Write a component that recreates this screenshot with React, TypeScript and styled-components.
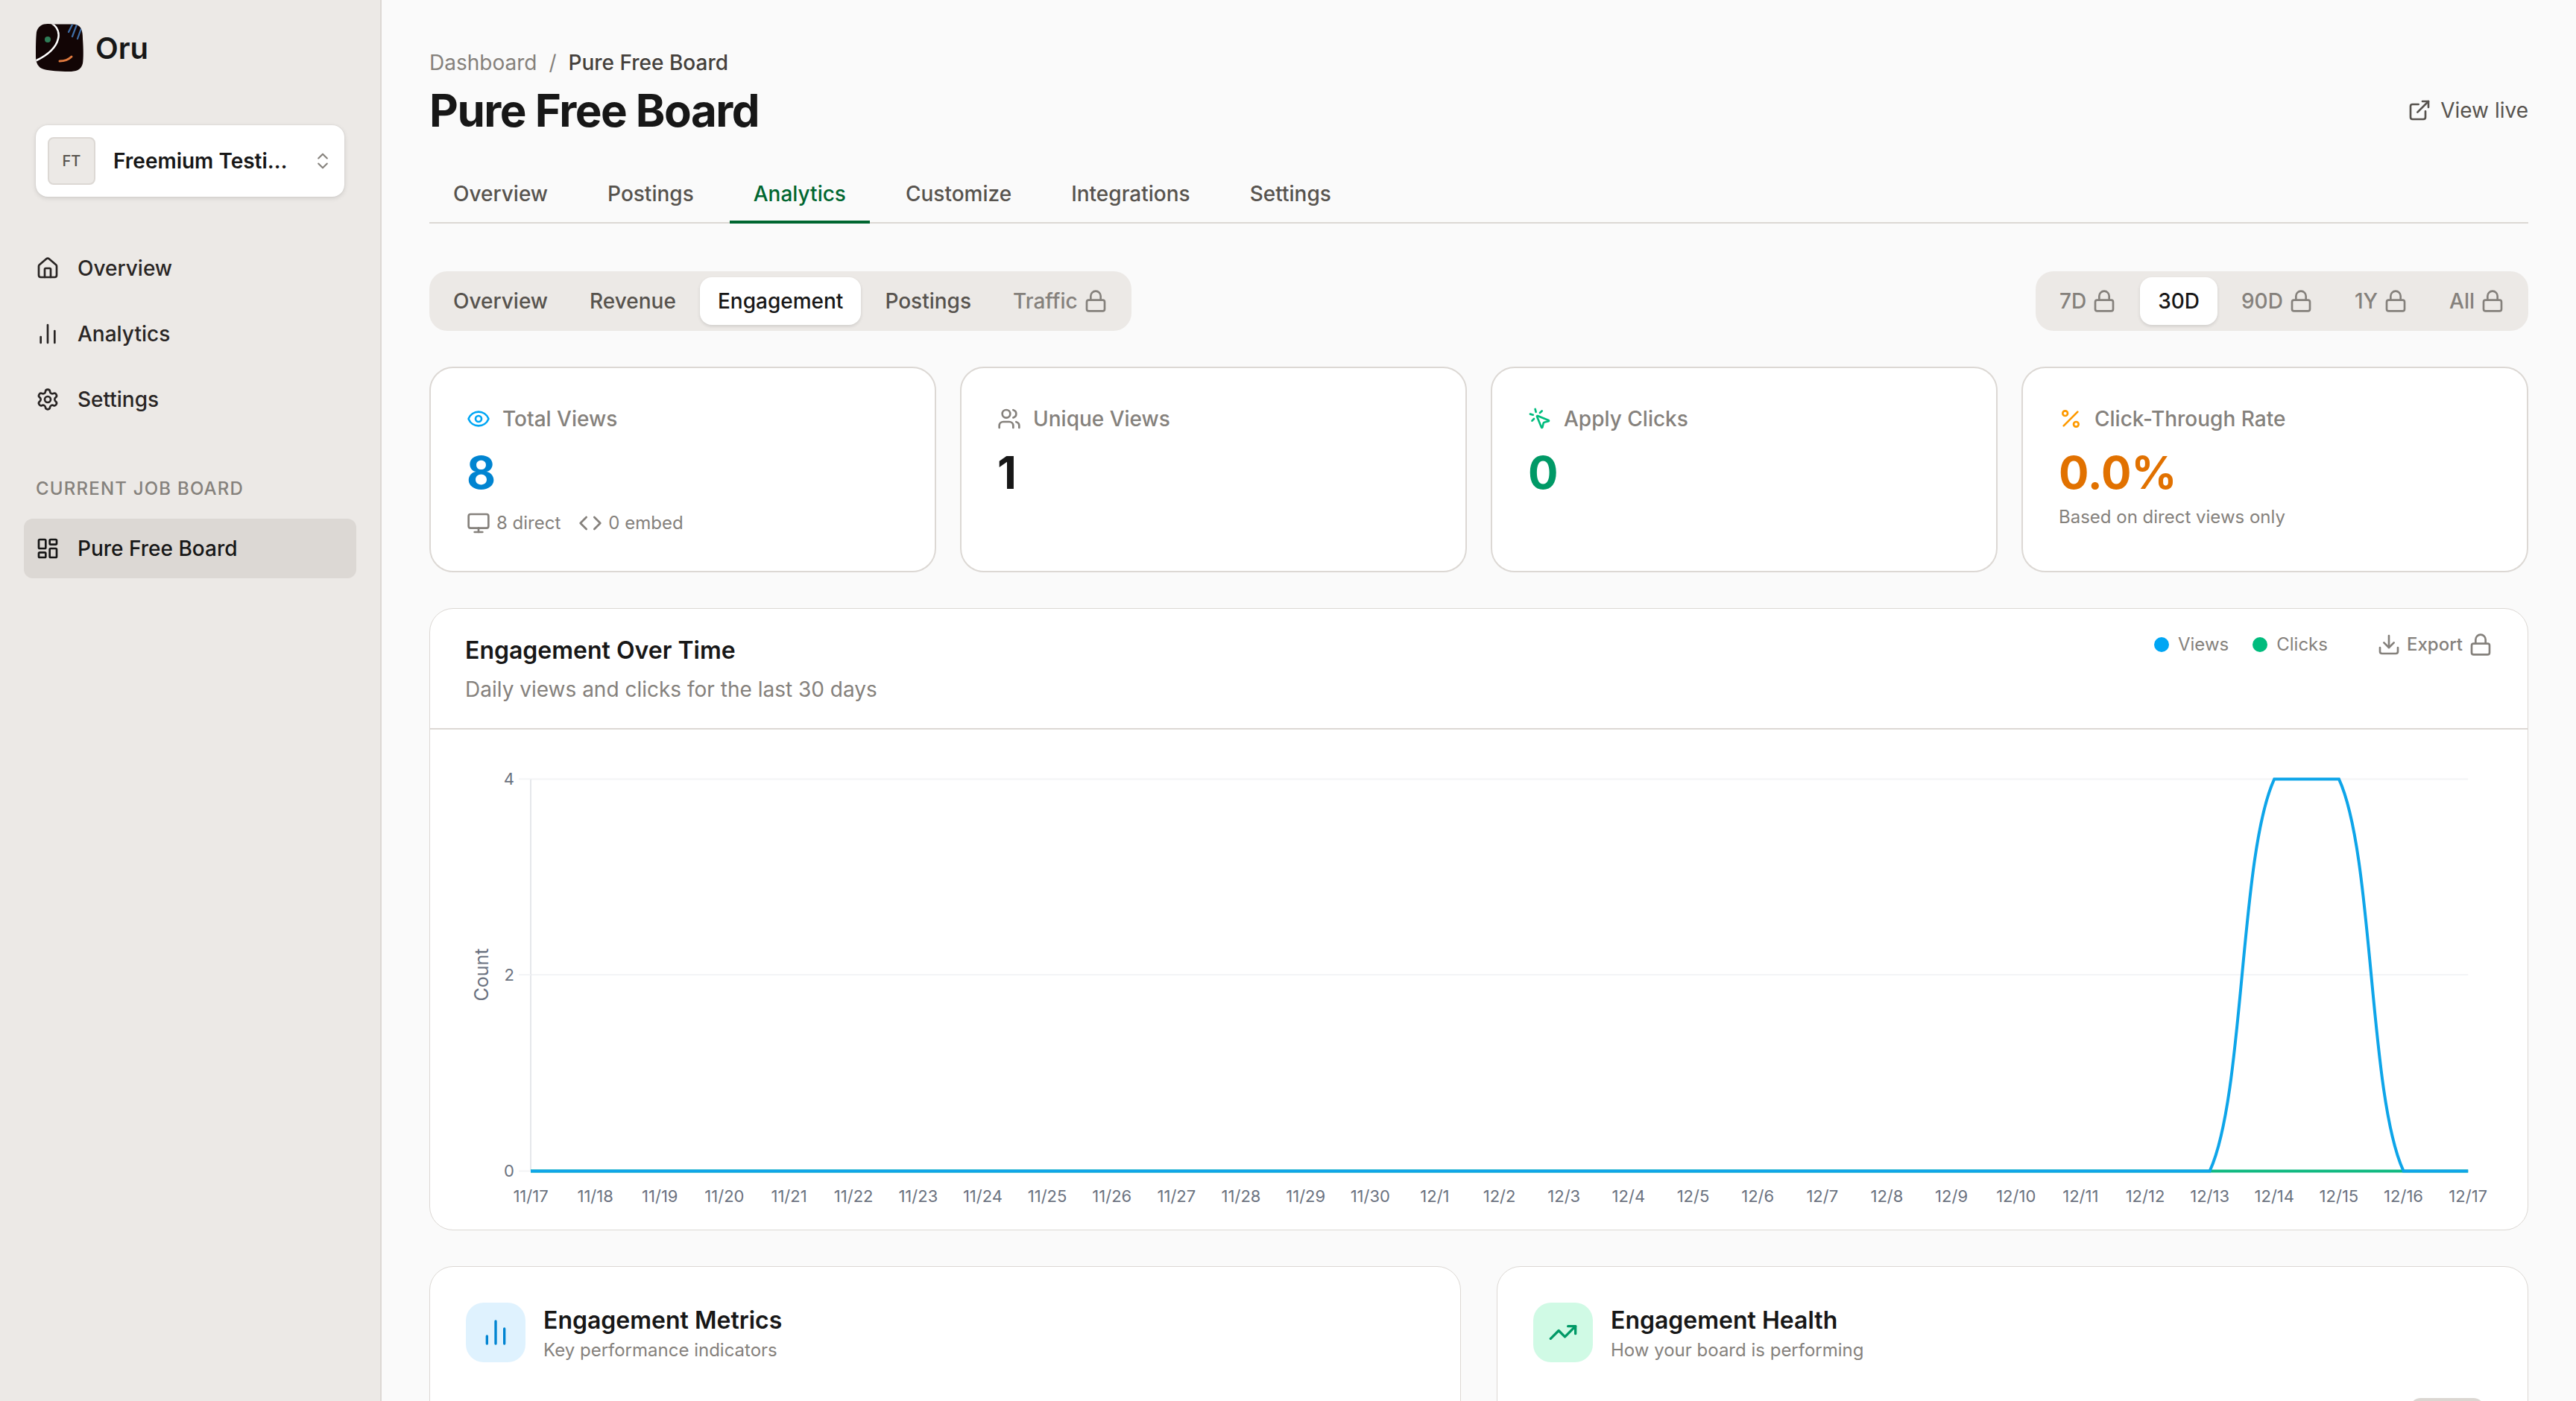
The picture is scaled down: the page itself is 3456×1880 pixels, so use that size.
import styled, { createGlobalStyle } from "styled-components";
import {
  ChartNoAxesColumn,
  ChevronsUpDown,
  Code,
  Download,
  ExternalLink,
  Eye,
  House,
  LayoutDashboard,
  Lock,
  Monitor,
  MousePointerClick,
  Percent,
  Settings,
  TrendingUp,
  Users,
} from "lucide-react";

const GlobalStyle = createGlobalStyle`
  html, body {
    margin: 0;
    padding: 0;
    background: #fafafa;
    overflow: hidden;
  }
  * {
    box-sizing: border-box;
  }
  #root {
    zoom: 2;
  }
`;

const Page = styled.div`
  display: flex;
  width: 1728px;
  height: 940px;
  overflow: hidden;
  font-family: Inter, "Liberation Sans", sans-serif;
  color: #171717;
  background: #fafafa;
`;

const Sidebar = styled.aside`
  flex: 0 0 256px;
  background: #ece9e6;
  border-right: 1px solid #dcd8d4;
  padding-top: 16px;
`;

const Brand = styled.div`
  display: flex;
  align-items: center;
  gap: 8px;
  padding-left: 24px;
  font-size: 20px;
  font-weight: 600;
`;

const BoardSelect = styled.button`
  display: flex;
  align-items: center;
  gap: 12px;
  width: 207px;
  height: 48px;
  margin: 36px 0 28px 24px;
  padding: 0 7.5px 0 8px;
  border: 0;
  border-radius: 8px;
  background: #fff;
  box-shadow: 0 1px 3px rgba(0, 0, 0, 0.12), 0 0 1px rgba(0, 0, 0, 0.1);
  font: inherit;
  color: #171717;
`;

const Avatar = styled.span`
  flex: 0 0 32px;
  height: 32px;
  display: flex;
  align-items: center;
  justify-content: center;
  border: 1px solid #dcd8d4;
  border-radius: 4px;
  background: #ece9e6;
  font-size: 10px;
  font-weight: 500;
  color: #57534e;
`;

const BoardName = styled.span`
  flex: 1;
  min-width: 0;
  white-space: nowrap;
  text-align: left;
  font-size: 14px;
  font-weight: 600;
`;

const NavList = styled.nav`
  display: flex;
  flex-direction: column;
  gap: 4px;
  padding: 0 16px 0 16px;
`;

const NavItem = styled.a<{ $active?: boolean }>`
  display: flex;
  align-items: center;
  gap: 12px;
  height: 40px;
  padding: 0 8px;
  border-radius: 6px;
  font-size: 14px;
  font-weight: 500;
  color: ${(p) => (p.$active ? "#171717" : "#292524")};
  background: ${(p) => (p.$active ? "#dcd8d4" : "transparent")};
`;

const SectionLabel = styled.div`
  margin: 32px 0 12px 24px;
  line-height: 16px;
  font-size: 12px;
  font-weight: 500;
  letter-spacing: 0.05em;
  text-transform: uppercase;
  color: #85817c;
`;

const Main = styled.main`
  flex: 1;
  min-width: 0;
  padding: 32px 32px 0;
`;

const Breadcrumb = styled.div`
  display: flex;
  gap: 8px;
  line-height: 20px;
  font-size: 14px;
  color: #85817c;
  span:last-child {
    color: #44403c;
    font-weight: 500;
  }
`;

const HeaderRow = styled.div`
  display: flex;
  justify-content: space-between;
  align-items: flex-end;
`;

const Title = styled.h1`
  margin: 4px 0 0;
  line-height: 36px;
  font-size: 30px;
  font-weight: 700;
  letter-spacing: -0.025em;
`;

const ViewLive = styled.a`
  display: flex;
  align-items: center;
  gap: 6px;
  height: 36px;
  font-size: 14px;
  color: #57534e;
`;

const TabBar = styled.div`
  display: flex;
  gap: 8px;
  margin-top: 16px;
  border-bottom: 1px solid #dcd8d4;
`;

const Tab = styled.a<{ $active?: boolean }>`
  margin-bottom: -1px;
  padding: 12px 16px 8px;
  line-height: 20px;
  font-size: 14px;
  font-weight: 500;
  border-bottom: 2px solid ${(p) => (p.$active ? "#006630" : "transparent")};
  color: ${(p) => (p.$active ? "#006630" : "#57534e")};
`;

const ControlRow = styled.div`
  display: flex;
  justify-content: space-between;
  margin-top: 32px;
`;

const Segmented = styled.div`
  display: flex;
  gap: 4px;
  height: 40px;
  padding: 4px;
  border-radius: 12px;
  background: #ece9e6;
`;

const Segment = styled.span<{ $active?: boolean; $locked?: boolean }>`
  display: flex;
  align-items: center;
  gap: 4px;
  padding: 0 12px;
  border-radius: 8px;
  font-size: 14px;
  font-weight: 500;
  color: ${(p) => (p.$active ? "#171717" : p.$locked ? "#85817c" : "#57534e")};
  background: ${(p) => (p.$active ? "#fff" : "transparent")};
  box-shadow: ${(p) => (p.$active ? "0 1px 2px rgba(0, 0, 0, 0.12)" : "none")};
`;

const StatGrid = styled.div`
  display: grid;
  grid-template-columns: repeat(4, 1fr);
  gap: 16px;
  margin-top: 24px;
`;

const StatCard = styled.div`
  padding: 24px;
  border: 1px solid #dcd8d4;
  border-radius: 16px;
  background: #fff;
`;

const StatLabel = styled.div`
  display: flex;
  align-items: center;
  gap: 8px;
  line-height: 20px;
  font-size: 14px;
  font-weight: 500;
  color: #85817c;
`;

const StatValue = styled.div<{ $color: string }>`
  margin-top: 8px;
  line-height: 36px;
  font-size: 30px;
  font-weight: 700;
  color: ${(p) => p.$color};
`;

const StatMeta = styled.div`
  display: flex;
  align-items: center;
  gap: 12px;
  margin-top: 8px;
  line-height: 16px;
  font-size: 12px;
  color: #85817c;
`;

const MetaItem = styled.span`
  display: flex;
  align-items: center;
  gap: 4px;
`;

const StatNote = styled.div`
  margin-top: 4px;
  line-height: 16px;
  font-size: 12px;
  color: #85817c;
`;

const ChartCard = styled.section`
  margin-top: 24px;
  border: 0.5px solid #dcd8d4;
  border-radius: 16px;
  background: #fff;
  overflow: hidden;
`;

const ChartHeader = styled.header`
  display: flex;
  justify-content: space-between;
  padding: 16px 23.5px;
  border-bottom: 1px solid #dcd8d4;
`;

const CardTitle = styled.h2`
  margin: 0;
  line-height: 24px;
  font-size: 16px;
  font-weight: 600;
`;

const ChartSub = styled.p`
  margin: 4px 0 0;
  line-height: 20px;
  font-size: 14px;
  color: #85817c;
`;

const ChartTools = styled.div`
  display: flex;
  align-items: flex-start;
  line-height: 16px;
  font-size: 12px;
  color: #85817c;
`;

const Legend = styled.span`
  display: flex;
  align-items: center;
  gap: 6px;
  margin-right: 16px;
`;

const Dot = styled.i<{ $color: string }>`
  width: 10px;
  height: 10px;
  border-radius: 50%;
  background: ${(p) => p.$color};
`;

const ExportButton = styled.span`
  display: flex;
  align-items: center;
  gap: 4px;
  margin-left: 17px;
  font-weight: 500;
`;

const ChartSvg = styled.svg`
  display: block;
  width: 100%;
  height: 335.5px;
  font-family: Inter, "Liberation Sans", sans-serif;
`;

const BottomGrid = styled.div`
  display: grid;
  grid-template-columns: 1fr 1fr;
  gap: 24px;
  margin-top: 24px;
`;

const InfoCard = styled.section`
  height: 200px;
  padding: 24px;
  border: 0.5px solid #dcd8d4;
  border-radius: 16px;
  background: #fff;
`;

const InfoHeader = styled.div`
  display: flex;
  gap: 12px;
`;

const InfoIcon = styled.span<{ $bg: string; $color: string }>`
  display: flex;
  align-items: center;
  justify-content: center;
  width: 40px;
  height: 40px;
  border-radius: 12px;
  background: ${(p) => p.$bg};
  color: ${(p) => p.$color};
`;

const InfoSub = styled.p`
  margin: 0;
  line-height: 16px;
  font-size: 12px;
  color: #85817c;
`;

const Pill = styled.span`
  display: block;
  width: 51px;
  height: 20px;
  margin: 24px 4.5px 0 auto;
  border-radius: 8px;
  background: #dbd7d2;
`;

const Logo = () => (
  <svg width="32" height="32" viewBox="0 0 64 64">
    <defs>
      <clipPath id="logo-clip">
        <path d="M16 0C30 1 48 0 54 1C61 3 63 9 63 20C64 34 64 46 63 53C61 62 54 64 44 64C32 64 18 63 11 61C3 59 0 52 0 44C0 32 0 20 1 11C3 3 9 0 16 0Z" />
      </clipPath>
    </defs>
    <g clipPath="url(#logo-clip)">
      <rect width="64" height="64" fill="#120505" />
      <path d="M21 -1C29 4 32 12 30 20C27 33 14 43 -1 50" fill="none" stroke="#fff" strokeWidth="2.6" />
      <circle cx="16" cy="21" r="4" fill="#2f7d57" />
      <path d="M32 50C38 50 44 48 48 44" fill="none" stroke="#e07a3f" strokeWidth="3" strokeLinecap="round" />
      <path d="M49 1L44 11M55 1L49 17M61 6L56 20" fill="none" stroke="#3f6fa8" strokeWidth="2.2" strokeLinecap="round" />
    </g>
  </svg>
);

const ticks = [
  ...[17, 18, 19, 20, 21, 22, 23, 24, 25, 26, 27, 28, 29, 30].map((d) => `11/${d}`),
  ...Array.from({ length: 17 }, (_, i) => `12/${i + 1}`),
];

const X0 = 67.5;
const STEP = 43.32;
const TOP = 33.2;
const MID = 164.5;
const BOTTOM = 296.2;
const xAt = (i: number) => X0 + i * STEP;
const XEND = xAt(30);

const viewsPath = [
  `M${X0} ${BOTTOM}L${xAt(26)} ${BOTTOM}`,
  `C${xAt(26) + 23.4} ${BOTTOM - 50.5} ${xAt(27) - 23.4} ${TOP + 50.5} ${xAt(27)} ${TOP}`,
  `L${xAt(28)} ${TOP}`,
  `C${xAt(28) + 23.4} ${TOP + 50.5} ${xAt(29) - 23.4} ${BOTTOM - 50.5} ${xAt(29)} ${BOTTOM}`,
  `L${XEND} ${BOTTOM}`,
].join("");

const EngagementChart = () => (
  <ChartSvg viewBox="0 0 1407 335.5">
    {[TOP, MID].map((y) => (
      <line key={y} x1={X0} x2={XEND} y1={y} y2={y} stroke="#f3f4f6" />
    ))}
    <line x1={X0} x2={X0} y1={TOP} y2={BOTTOM} stroke="#e5e7eb" />
    {[TOP, MID, BOTTOM].map((y) => (
      <line key={y} x1={X0 - 8} x2={X0} y1={y} y2={y} stroke="#f3f4f6" />
    ))}
    {[
      ["4", TOP],
      ["2", MID],
      ["0", BOTTOM],
    ].map(([label, y]) => (
      <text key={label} x={X0 - 11} y={Number(y) + 4} textAnchor="end" fontSize="11" fill="#6b7280">
        {label}
      </text>
    ))}
    <text
      transform={`translate(39 ${MID}) rotate(-90)`}
      textAnchor="middle"
      fontSize="12.5"
      fill="#6b7280"
    >
      Count
    </text>
    {ticks.map((t, i) => (
      <text key={t} x={xAt(i)} y={317} textAnchor="middle" fontSize="11" fill="#6b7280">
        {t}
      </text>
    ))}
    <line x1={X0} x2={XEND} y1={BOTTOM} y2={BOTTOM} stroke="#10b981" strokeWidth="2" />
    <path d={viewsPath} fill="none" stroke="#0ea5e9" strokeWidth="2" strokeLinejoin="miter" />
  </ChartSvg>
);

function App() {
  return (
    <Page>
      <GlobalStyle />
      <Sidebar>
        <Brand>
          <Logo />
          Oru
        </Brand>
        <BoardSelect>
          <Avatar>FT</Avatar>
          <BoardName>Freemium Testi…</BoardName>
          <ChevronsUpDown size={14} strokeWidth={1.75} color="#85817c" />
        </BoardSelect>
        <NavList>
          <NavItem>
            <House size={16} />
            Overview
          </NavItem>
          <NavItem>
            <ChartNoAxesColumn size={16} />
            Analytics
          </NavItem>
          <NavItem>
            <Settings size={16} />
            Settings
          </NavItem>
        </NavList>
        <SectionLabel>Current job board</SectionLabel>
        <NavList>
          <NavItem $active>
            <LayoutDashboard size={16} />
            Pure Free Board
          </NavItem>
        </NavList>
      </Sidebar>
      <Main>
        <Breadcrumb>
          <span>Dashboard</span>
          <span>/</span>
          <span>Pure Free Board</span>
        </Breadcrumb>
        <HeaderRow>
          <Title>Pure Free Board</Title>
          <ViewLive>
            <ExternalLink size={16} />
            View live
          </ViewLive>
        </HeaderRow>
        <TabBar>
          <Tab>Overview</Tab>
          <Tab>Postings</Tab>
          <Tab $active>Analytics</Tab>
          <Tab>Customize</Tab>
          <Tab>Integrations</Tab>
          <Tab>Settings</Tab>
        </TabBar>
        <ControlRow>
          <Segmented>
            <Segment>Overview</Segment>
            <Segment>Revenue</Segment>
            <Segment $active>Engagement</Segment>
            <Segment>Postings</Segment>
            <Segment $locked>
              Traffic
              <Lock size={16} />
            </Segment>
          </Segmented>
          <Segmented>
            <Segment $locked>
              7D
              <Lock size={16} />
            </Segment>
            <Segment $active>30D</Segment>
            <Segment $locked>
              90D
              <Lock size={16} />
            </Segment>
            <Segment $locked>
              1Y
              <Lock size={16} />
            </Segment>
            <Segment $locked>
              All
              <Lock size={16} />
            </Segment>
          </Segmented>
        </ControlRow>
        <StatGrid>
          <StatCard>
            <StatLabel>
              <Eye size={16} color="#00a6f4" />
              Total Views
            </StatLabel>
            <StatValue $color="#0084d1">8</StatValue>
            <StatMeta>
              <MetaItem>
                <Monitor size={16} />8 direct
              </MetaItem>
              <MetaItem>
                <Code size={16} />0 embed
              </MetaItem>
            </StatMeta>
          </StatCard>
          <StatCard>
            <StatLabel>
              <Users size={16} />
              Unique Views
            </StatLabel>
            <StatValue $color="#171717">1</StatValue>
          </StatCard>
          <StatCard>
            <StatLabel>
              <MousePointerClick size={16} color="#00bc7d" />
              Apply Clicks
            </StatLabel>
            <StatValue $color="#009966">0</StatValue>
          </StatCard>
          <StatCard>
            <StatLabel>
              <Percent size={16} color="#fe9a00" />
              Click-Through Rate
            </StatLabel>
            <StatValue $color="#e17100">0.0%</StatValue>
            <StatNote>Based on direct views only</StatNote>
          </StatCard>
        </StatGrid>
        <ChartCard>
          <ChartHeader>
            <div>
              <CardTitle>Engagement Over Time</CardTitle>
              <ChartSub>Daily views and clicks for the last 30 days</ChartSub>
            </div>
            <ChartTools>
              <Legend>
                <Dot $color="#00a6f4" />
                Views
              </Legend>
              <Legend>
                <Dot $color="#00bc7d" />
                Clicks
              </Legend>
              <ExportButton>
                <Download size={16} />
                Export
                <Lock size={16} />
              </ExportButton>
            </ChartTools>
          </ChartHeader>
          <EngagementChart />
        </ChartCard>
        <BottomGrid>
          <InfoCard>
            <InfoHeader>
              <InfoIcon $bg="#dff2fe" $color="#0084d1">
                <ChartNoAxesColumn size={20} />
              </InfoIcon>
              <div>
                <CardTitle>Engagement Metrics</CardTitle>
                <InfoSub>Key performance indicators</InfoSub>
              </div>
            </InfoHeader>
          </InfoCard>
          <InfoCard>
            <InfoHeader>
              <InfoIcon $bg="#d0fae5" $color="#009966">
                <TrendingUp size={20} />
              </InfoIcon>
              <div>
                <CardTitle>Engagement Health</CardTitle>
                <InfoSub>How your board is performing</InfoSub>
              </div>
            </InfoHeader>
            <Pill />
          </InfoCard>
        </BottomGrid>
      </Main>
    </Page>
  );
}

export default App;
